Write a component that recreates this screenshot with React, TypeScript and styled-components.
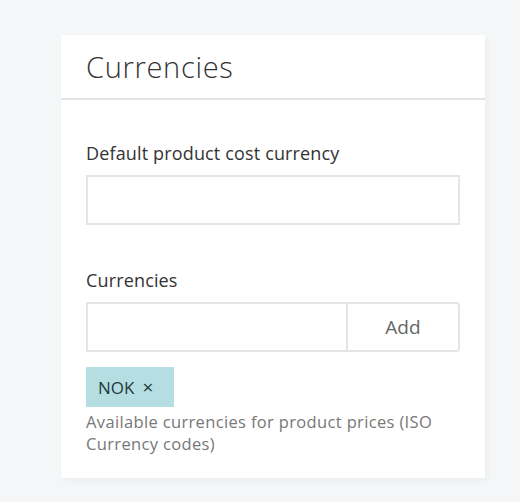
import styled, { createGlobalStyle } from "styled-components";

const GlobalStyle = createGlobalStyle`
  body {
    margin: 0;
    background: #f5f6f8;
    font-family: "Open Sans", "Noto Sans", sans-serif;
  }
`;

const Page = styled.div`
  padding: 35px 0 0 61px;
  height: 467px;
`;

const Card = styled.div`
  width: 424px;
  height: 443px;
  background: #fff;
  box-shadow: 2px 3px 6px rgba(0, 0, 0, 0.04);
`;

const Header = styled.div`
  height: 63px;
  border-bottom: 2px solid #e2e2e4;
  display: flex;
  align-items: center;
  padding: 0 25px;
`;

const Title = styled.h2`
  margin: 0;
  font-size: 29px;
  font-weight: 300;
  letter-spacing: 0.7px;
  color: #333;
`;

const Body = styled.div`
  padding: 40px 25px 0;
  display: flex;
  flex-direction: column;
`;

const Field = styled.div<{ $gap?: number }>`
  display: flex;
  flex-direction: column;
  margin-bottom: ${(p) => p.$gap ?? 0}px;
`;

const Label = styled.label`
  font-size: 18px;
  letter-spacing: 0.15px;
  color: #333;
  line-height: 26px;
  margin-bottom: 9px;
`;

const TextInput = styled.input`
  box-sizing: border-box;
  height: 50px;
  border: 2px solid #e4e5e8;
  border-radius: 0;
  outline: none;
  padding: 0 12px;
  font-size: 17px;
  width: 100%;
`;

const Group = styled.div`
  display: flex;
`;

const GroupInput = styled(TextInput)`
  flex: 1;
  width: auto;
  border-right: none;
`;

const AddButton = styled.button`
  width: 114px;
  height: 50px;
  background: #fff;
  border: 2px solid #e4e5e8;
  border-radius: 0 4px 4px 0;
  font-family: inherit;
  font-size: 19px;
  color: #666;
  cursor: pointer;
`;

const Tags = styled.div`
  display: flex;
  margin-top: 15px;
`;

const Tag = styled.span`
  background: #b4dee1;
  color: #1f3a40;
  font-size: 17px;
  height: 40px;
  padding: 0 21px 0 12px;
  display: flex;
  align-items: center;
  gap: 8px;
`;

const Remove = styled.span`
  font-size: 19px;
  cursor: pointer;
`;

const Help = styled.p`
  margin: 4px 0 0;
  font-size: 16.5px;
  letter-spacing: 0.35px;
  line-height: 22px;
  color: #777;
  width: 370px;
`;

export default function App() {
  return (
    <>
      <GlobalStyle />
      <Page>
        <Card>
          <Header>
            <Title>Currencies</Title>
          </Header>
          <Body>
            <Field $gap={42}>
              <Label>Default product cost currency</Label>
              <TextInput type="text" />
            </Field>
            <Field>
              <Label>Currencies</Label>
              <Group>
                <GroupInput type="text" />
                <AddButton>Add</AddButton>
              </Group>
              <Tags>
                <Tag>
                  NOK <Remove>×</Remove>
                </Tag>
              </Tags>
              <Help>Available currencies for product prices (ISO Currency codes)</Help>
            </Field>
          </Body>
        </Card>
      </Page>
    </>
  );
}
